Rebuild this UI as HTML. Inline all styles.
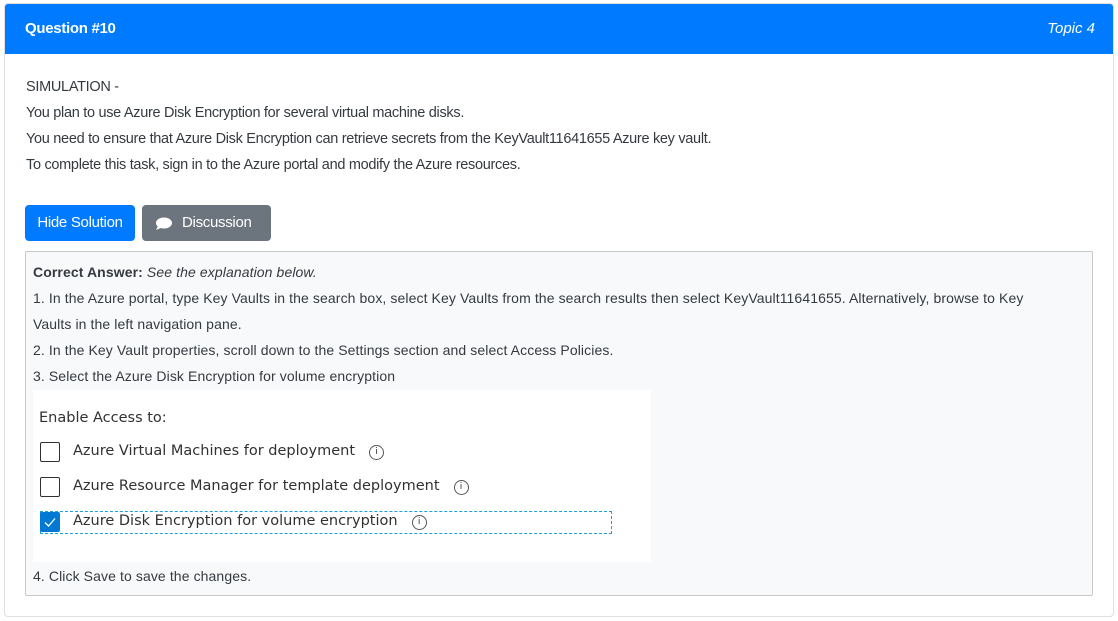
<!DOCTYPE html>
<html><head><style>
body{margin:0;background:#fff;font-family:"Liberation Sans",sans-serif;color:#343a40;}
.card{position:absolute;left:4px;top:3px;width:1108px;height:612px;border:1px solid #dfdfdf;border-radius:4px;overflow:hidden}
.hdr{height:50px;background:#007bff;color:#fff;font-size:15px;position:relative}
.hdr .l{position:absolute;left:20px;top:16px;font-weight:bold;letter-spacing:-0.3px}
.hdr .r{position:absolute;right:18px;top:16px;font-style:italic}
.t{position:absolute;left:21px;font-size:14.5px;letter-spacing:-0.3px;line-height:26px;white-space:nowrap}
.btn{position:absolute;top:201px;height:36px;border-radius:4px;color:#fff;font-size:15px;line-height:36px;letter-spacing:-0.3px}
.ans{position:absolute;left:20px;top:247px;width:1066px;height:343px;background:#f8f9fa;border:1px solid #c8c8c8;border-radius:2px;font-size:14px;letter-spacing:0.1px;color:#343a40}
.ans .ln{position:absolute;left:7px;white-space:nowrap;line-height:26px}
.img{position:absolute;left:7px;top:138px;width:618px;height:172px;background:#fff;font-family:"DejaVu Sans",sans-serif;color:#323130;font-size:14px;letter-spacing:0}
.cb{position:absolute;left:7px;width:20px;height:20px;border:1px solid #323130;border-radius:2px;box-sizing:border-box}
.lab{position:absolute;left:40px;white-space:nowrap;font-size:14.5px}
.i{display:inline-block;width:13px;height:13px;border:1px solid #555;border-radius:50%;font-size:9px;line-height:13px;text-align:center;margin-left:14px;vertical-align:1px}
</style></head><body>
<div class="card">
<div class="hdr"><span class="l">Question #10</span><span class="r">Topic 4</span></div>
<div class="t" style="top:70px">SIMULATION -</div>
<div class="t" style="top:96px">You plan to use Azure Disk Encryption for several virtual machine disks.</div>
<div class="t" style="top:122px">You need to ensure that Azure Disk Encryption can retrieve secrets from the KeyVault11641655 Azure key vault.</div>
<div class="t" style="top:148px">To complete this task, sign in to the Azure portal and modify the Azure resources.</div>
<div class="btn" style="left:20px;width:110px;background:#007bff;text-align:center">Hide Solution</div>
<div class="btn" style="left:137px;width:129px;background:#6c757d"><svg style="position:absolute;left:13px;top:12px" width="18" height="14" viewBox="0 0 18 14"><ellipse cx="9" cy="6" rx="8" ry="5.5" fill="#fff"/><path d="M3 9 L1 13 L7 10.5Z" fill="#fff"/></svg><span style="position:absolute;left:40px">Discussion</span></div>
<div class="ans">
<div class="ln" style="top:7px"><b>Correct Answer:</b> <i>See the explanation below.</i></div>
<div class="ln" style="top:33px">1. In the Azure portal, type Key Vaults in the search box, select Key Vaults from the search results then select KeyVault11641655. Alternatively, browse to Key</div>
<div class="ln" style="top:59px">Vaults in the left navigation pane.</div>
<div class="ln" style="top:85px">2. In the Key Vault properties, scroll down to the Settings section and select Access Policies.</div>
<div class="ln" style="top:111px">3. Select the Azure Disk Encryption for volume encryption</div>
<div class="img">
<div class="lab" style="left:6px;top:20px">Enable Access to:</div>
<div class="cb" style="top:52px"></div><div class="lab" style="top:53px">Azure Virtual Machines for deployment<span class="i">i</span></div>
<div class="cb" style="top:87px"></div><div class="lab" style="top:88px">Azure Resource Manager for template deployment<span class="i">i</span></div>
<div style="position:absolute;left:7px;top:121px;width:570px;height:21px;border:1px dashed #1aa0dc"></div>
<div class="cb" style="top:122px;background:#0078d4;border-color:#0078d4"><svg width="20" height="20" viewBox="0 0 20 20" style="position:absolute;left:-1px;top:-1px"><path d="M5 10.5 L8.5 14 L15 6.5" stroke="#fff" stroke-width="1.3" fill="none"/></svg></div>
<div class="lab" style="top:123px">Azure Disk Encryption for volume encryption<span class="i">i</span></div>
</div>
<div class="ln" style="top:311px">4. Click Save to save the changes.</div>
</div>
</div>
</body></html>
